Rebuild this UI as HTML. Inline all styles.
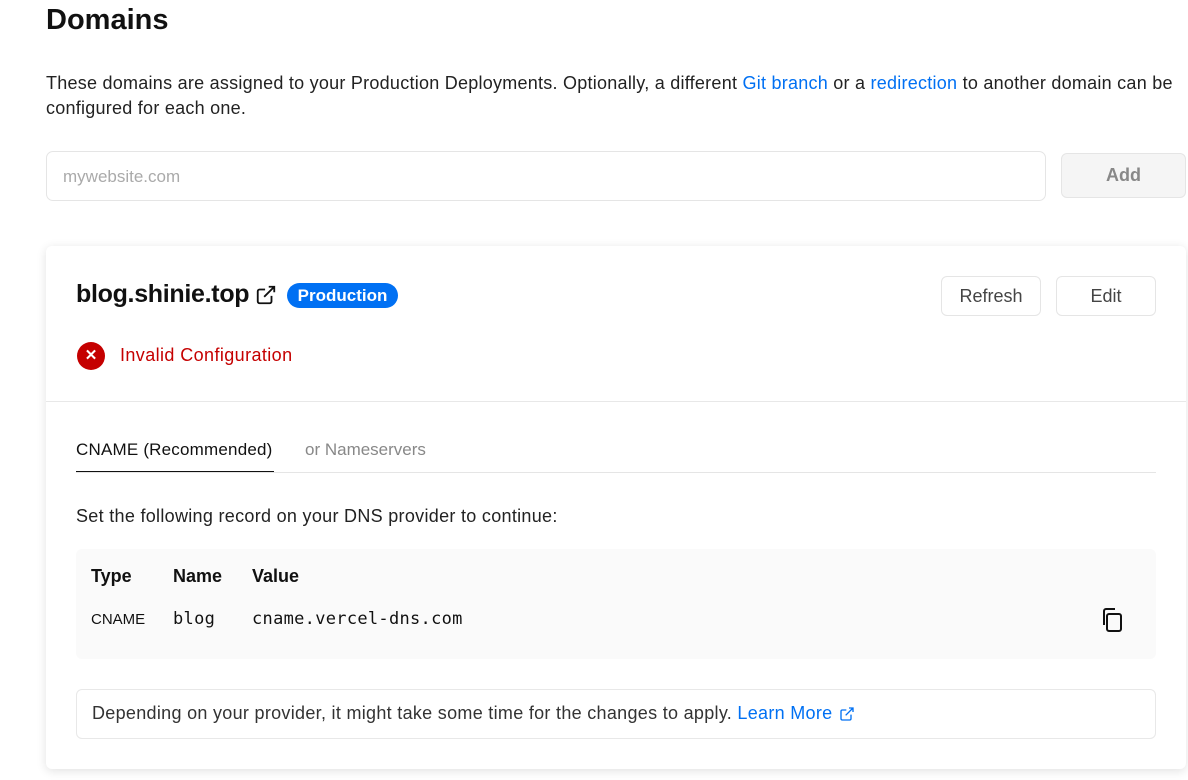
<!DOCTYPE html>
<html><head><meta charset="utf-8"><style>
*{box-sizing:border-box;margin:0;padding:0}
body{width:1188px;height:780px;overflow:hidden;background:#fff;font-family:"Liberation Sans",sans-serif;color:#111;position:relative}
.a{position:absolute;white-space:nowrap}
a{color:#0070f3;text-decoration:none}
.btn{position:absolute;border:1px solid #e5e5e5;border-radius:6px;background:#fff;font-size:17px;color:#444;display:flex;align-items:center;justify-content:center}
.mono{font-family:"DejaVu Sans Mono","Liberation Mono",monospace}
</style></head><body>
<div class="a" style="left:46px;top:4px;font-size:29px;font-weight:bold;">Domains</div>
<div class="a" style="left:46px;top:71px;width:1142px;font-size:18px;letter-spacing:0.25px;line-height:25px;color:#222;white-space:normal">These domains are assigned to your Production Deployments. Optionally, a different <a>Git branch</a> or a <a>redirection</a> to another domain can be configured for each one.</div>
<div class="a" style="left:46px;top:151px;width:1000px;height:50px;border:1px solid #e5e5e5;border-radius:7px;font-size:17px;color:#aaa;padding:15px 0 0 16px">mywebsite.com</div>
<div class="btn" style="left:1061px;top:153px;width:125px;height:45px;background:#f5f5f5;color:#888;font-weight:bold;font-size:18px">Add</div>

<div class="a" style="left:46px;top:246px;width:1140px;height:523px;border-radius:6px;box-shadow:0 2px 10px rgba(0,0,0,0.12);background:#fff"></div>
<div class="a" style="left:76px;top:280px;font-size:25px;font-weight:bold;letter-spacing:-0.3px">blog.shinie.top</div>
<svg class="a" style="left:255px;top:284px" width="22" height="22" viewBox="0 0 24 24" fill="none" stroke="#111" stroke-width="2"><path d="M18 13v6a2 2 0 0 1-2 2H5a2 2 0 0 1-2-2V8a2 2 0 0 1 2-2h6"/><path d="M15 3h6v6M10 14L21 3"/></svg>
<div class="a" style="left:287px;top:283px;width:111px;height:25px;border-radius:13px;background:#0070f3;color:#fff;font-size:17px;font-weight:bold;text-align:center;line-height:25px">Production</div>
<div class="btn" style="left:941px;top:276px;width:100px;height:40px;font-size:18px">Refresh</div>
<div class="btn" style="left:1056px;top:276px;width:100px;height:40px;font-size:18px">Edit</div>
<div class="a" style="left:77px;top:342px;width:28px;height:28px;border-radius:50%;background:#c50000;color:#fff;text-align:center;line-height:28px;font-size:15px;font-weight:bold">✕</div>
<div class="a" style="left:120px;top:345px;font-size:18px;letter-spacing:0.4px;color:#c50000">Invalid Configuration</div>
<div class="a" style="left:46px;top:401px;width:1140px;height:1px;background:#e8e8e8"></div>

<div class="a" style="left:76px;top:440px;font-size:17px;letter-spacing:0.2px;color:#111">CNAME (Recommended)</div>
<div class="a" style="left:76px;top:471px;width:198px;height:2px;background:#111"></div>
<div class="a" style="left:305px;top:440px;font-size:17px;color:#888">or Nameservers</div>
<div class="a" style="left:76px;top:472px;width:1080px;height:1px;background:#e5e5e5"></div>
<div class="a" style="left:76px;top:506px;font-size:18px;letter-spacing:0.3px;color:#222">Set the following record on your DNS provider to continue:</div>

<div class="a" style="left:76px;top:549px;width:1080px;height:110px;background:#fafafa;border-radius:6px"></div>
<div class="a" style="left:91px;top:566px;font-size:18px;font-weight:bold">Type</div>
<div class="a" style="left:173px;top:566px;font-size:18px;font-weight:bold">Name</div>
<div class="a" style="left:252px;top:566px;font-size:18px;font-weight:bold">Value</div>
<div class="a" style="left:91px;top:611px;font-size:15px">CNAME</div>
<div class="a mono" style="left:173px;top:609px;font-size:17px;letter-spacing:0.3px">blog</div>
<div class="a mono" style="left:252px;top:609px;font-size:17px;letter-spacing:0.3px">cname.vercel-dns.com</div>
<svg class="a" style="left:1100px;top:607px" width="24" height="26" viewBox="0 0 24 26" fill="none" stroke="#111" stroke-width="2"><rect x="7" y="7" width="14" height="17" rx="2"/><path d="M4 18V4a2 2 0 0 1 2-2h9"/></svg>

<div class="a" style="left:76px;top:689px;width:1080px;height:50px;border:1px solid #e8e8e8;border-radius:6px"></div>
<div class="a" style="left:92px;top:703px;font-size:18px;letter-spacing:0.3px;color:#333">Depending on your provider, it might take some time for the changes to apply. <a>Learn More</a></div>
<svg class="a" style="left:839px;top:706px" width="16" height="16" viewBox="0 0 24 24" fill="none" stroke="#0070f3" stroke-width="2"><path d="M18 13v6a2 2 0 0 1-2 2H5a2 2 0 0 1-2-2V8a2 2 0 0 1 2-2h6"/><path d="M15 3h6v6M10 14L21 3"/></svg>
</body></html>
